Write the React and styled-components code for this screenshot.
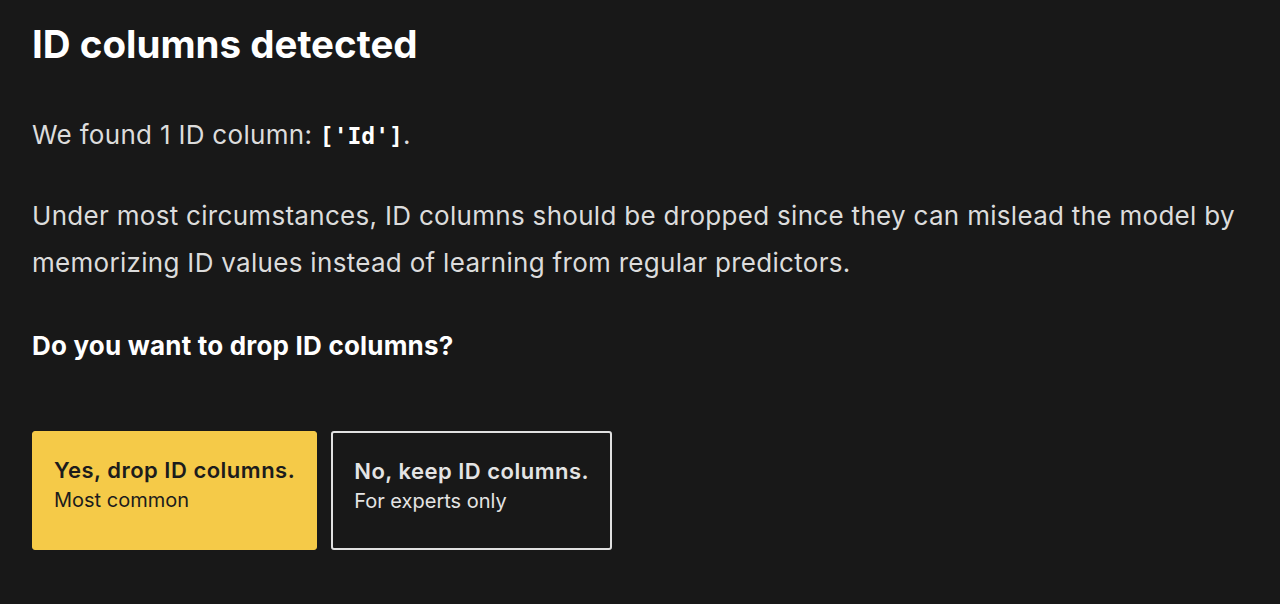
import React from 'react';
import styled, { createGlobalStyle } from 'styled-components';

const GlobalStyle = createGlobalStyle`
  html, body {
    margin: 0;
    padding: 0;
    background-color: #181818;
  }
  body {
    font-family: Inter, "Noto Sans", sans-serif;
    color: #dcdcdc;
  }
`;

const Page = styled.div`
  min-height: 604px;
  padding: 20px 32px 0 32px;
  box-sizing: border-box;
  background-color: #181818;
`;

const Title = styled.h1`
  margin: 0;
  font-size: 38.5px;
  line-height: 48px;
  font-weight: 700;
  color: #ffffff;
  letter-spacing: 0;
`;

const Paragraph = styled.p`
  margin: ${(p) => p.$top || 0}px 0 0 0;
  font-size: 26px;
  line-height: 47px;
  font-weight: 400;
  letter-spacing: 0.3px;
  color: #dcdcdc;
`;

const Code = styled.code`
  font-family: "DejaVu Sans Mono", "Liberation Mono", monospace;
  font-weight: 700;
  font-size: 23px;
  letter-spacing: 0;
  color: #ffffff;
`;

const Question = styled.h2`
  margin: 44px 0 0 0;
  font-size: 26px;
  line-height: 32px;
  font-weight: 700;
  letter-spacing: 0.2px;
  color: #ffffff;
`;

const Choices = styled.div`
  display: flex;
  gap: 14px;
  margin-top: 69px;
`;

const Choice = styled.button`
  display: flex;
  flex-direction: column;
  align-items: flex-start;
  justify-content: flex-start;
  height: 119px;
  padding: 24px 21px 0 21px;
  box-sizing: border-box;
  border-radius: 3px;
  font-family: inherit;
  cursor: pointer;
  text-align: left;
  background-color: ${(p) => (p.$primary ? '#f5ca48' : '#181818')};
  border: ${(p) => (p.$primary ? '1px solid #f5ca48' : '2px solid #e0e0e0')};
  color: ${(p) => (p.$primary ? '#1c1c1c' : '#e4e4e4')};
`;

const ChoiceLabel = styled.span`
  font-size: 22px;
  line-height: 28px;
  font-weight: 600;
  letter-spacing: 0.5px;
`;

const ChoiceHint = styled.span`
  font-size: 20px;
  line-height: 32px;
  font-weight: 400;
`;

export default function App() {
  return (
    <>
      <GlobalStyle />
      <Page>
        <Title>ID columns detected</Title>
        <Paragraph $top={43}>
          We found 1 ID column: <Code>['Id']</Code>.
        </Paragraph>
        <Paragraph $top={32}>
          Under most circumstances, ID columns should be dropped since they can mislead the model by
          memorizing ID values instead of learning from regular predictors.
        </Paragraph>
        <Question>Do you want to drop ID columns?</Question>
        <Choices>
          <Choice $primary>
            <ChoiceLabel>Yes, drop ID columns.</ChoiceLabel>
            <ChoiceHint>Most common</ChoiceHint>
          </Choice>
          <Choice>
            <ChoiceLabel>No, keep ID columns.</ChoiceLabel>
            <ChoiceHint>For experts only</ChoiceHint>
          </Choice>
        </Choices>
      </Page>
    </>
  );
}
